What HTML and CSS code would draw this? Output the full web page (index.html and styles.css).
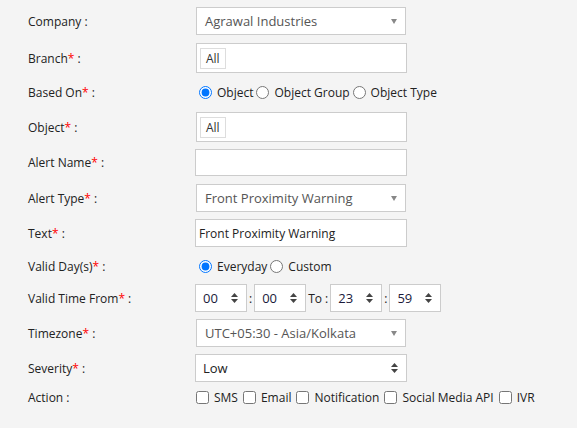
FILE: index.html
```html
<!DOCTYPE html>
<html lang="en">
<head>
	<meta charset="UTF-8">
	<title>Add Alert</title>
<link rel="stylesheet" href="styles.css">
</head>
<body>
<form class="alert-form" onsubmit="return false;">

  <div class="row">
    <label class="caption">Company :</label>
    <div class="combo">
      <span class="combo-text">Agrawal Industries</span>
      <span class="caret"></span>
    </div>
  </div>

  <div class="row spaced">
    <label class="caption">Branch<span class="req">*</span> :</label>
    <div class="tags"><span class="tag">All</span></div>
  </div>

  <div class="row row-choice spaced">
    <label class="caption">Based On<span class="req">*</span> :</label>
    <div class="choices">
      <label class="choice"><input type="radio" name="based" checked> Object</label>
      <label class="choice"><input type="radio" name="based"> Object Group</label>
      <label class="choice"><input type="radio" name="based"> Object Type</label>
    </div>
  </div>

  <div class="row spaced">
    <label class="caption">Object<span class="req">*</span> :</label>
    <div class="tags"><span class="tag">All</span></div>
  </div>

  <div class="row">
    <label class="caption">Alert Name<span class="req">*</span> :</label>
    <input class="field" type="text">
  </div>

  <div class="row spaced">
    <label class="caption">Alert Type<span class="req">*</span> :</label>
    <div class="combo">
      <span class="combo-text">Front Proximity Warning</span>
      <span class="caret"></span>
    </div>
  </div>

  <div class="row">
    <label class="caption">Text<span class="req">*</span> :</label>
    <input class="field field-tall" type="text" value="Front Proximity Warning">
  </div>

  <div class="row row-choice row-days spaced">
    <label class="caption">Valid Day(s)<span class="req">*</span> :</label>
    <div class="choices">
      <label class="choice"><input type="radio" name="days" checked> Everyday</label>
      <label class="choice"><input type="radio" name="days"> Custom</label>
    </div>
  </div>

  <div class="row">
    <label class="caption">Valid Time From<span class="req">*</span> :</label>
    <div class="times">
      <div class="spin"><span class="spin-text">00</span><svg class="updown" width="7" height="10" viewBox="0 0 7 10"><path d="M3.5 0L7 4H0z M3.5 10L0 6h7z"/></svg></div>
      <span class="sep">:</span>
      <div class="spin"><span class="spin-text">00</span><svg class="updown" width="7" height="10" viewBox="0 0 7 10"><path d="M3.5 0L7 4H0z M3.5 10L0 6h7z"/></svg></div>
      <span class="sep sep-to">To :</span>
      <div class="spin"><span class="spin-text">23</span><svg class="updown" width="7" height="10" viewBox="0 0 7 10"><path d="M3.5 0L7 4H0z M3.5 10L0 6h7z"/></svg></div>
      <span class="sep">:</span>
      <div class="spin"><span class="spin-text">59</span><svg class="updown" width="7" height="10" viewBox="0 0 7 10"><path d="M3.5 0L7 4H0z M3.5 10L0 6h7z"/></svg></div>
    </div>
  </div>

  <div class="row">
    <label class="caption">Timezone<span class="req">*</span> :</label>
    <div class="combo">
      <span class="combo-text">UTC+05:30 - Asia/Kolkata</span>
      <span class="caret"></span>
    </div>
  </div>

  <div class="row">
    <label class="caption">Severity<span class="req">*</span> :</label>
    <div class="spin spin-wide"><span class="spin-text">Low</span><svg class="updown" width="7" height="10" viewBox="0 0 7 10"><path d="M3.5 0L7 4H0z M3.5 10L0 6h7z"/></svg></div>
  </div>

  <div class="row row-action">
    <label class="caption">Action :</label>
    <div class="checks">
      <label class="check"><input type="checkbox"> SMS</label>
      <label class="check"><input type="checkbox"> Email</label>
      <label class="check"><input type="checkbox"> Notification</label>
      <label class="check"><input type="checkbox"> Social Media API</label>
      <label class="check"><input type="checkbox"> IVR</label>
    </div>
  </div>

</form>
</body>
</html>
```

FILE: styles.css
```css
html,body{
margin:0;padding:0;
background:#f4f4f4;
}
body{
font-family:"Open Sans","Liberation Sans",sans-serif;
font-size:12px;color:#222;
width:577px;height:428px;overflow:hidden;
}
/* form */
.alert-form{
display:flex;flex-direction:column;gap:7px;
padding:7px 0 0 28px;
}
.row{display:flex;align-items:center;}
.row.spaced{margin-top:1px;}
.caption{width:167px;flex:none;}
.req{color:#f00;}

/* select2 like box */
.combo{
box-sizing:border-box;width:210px;height:28px;margin-left:1px;
background:#fff;border:1px solid #ccc;
display:flex;align-items:center;justify-content:space-between;
padding:0 8px 0 8px;
font-size:13px;color:#555;
}
.caret{
width:0;height:0;margin-right:0;
border-left:3.5px solid transparent;border-right:3.5px solid transparent;
border-top:5px solid #888;
}

/* multi select with tags */
.tags{
box-sizing:border-box;width:211px;height:30px;margin-left:1px;
background:#fff;border:1px solid #ccc;
display:flex;align-items:center;padding-left:3px;
}
.tag{
box-sizing:border-box;height:21px;padding:0 5px;
border:1px solid #ddd;line-height:19px;
font-size:12px;color:#333;
}

/* text inputs */
.field{
box-sizing:border-box;width:212px;height:27px;margin:0;
background:#fff;border:1px solid #ccc;padding:0 3px;
font-family:inherit;font-size:12px;color:#222;outline:none;
}
.field-tall{height:28px;}

/* radios */
.row-choice{height:23px;}
.row-days{height:22px;}
.choices{display:flex;align-items:center;margin-left:3px;}
.choice{display:flex;align-items:center;margin-right:3px;}
.choice input{margin:0 5px 0 1px;width:13px;height:13px;}
.choice + .choice input{margin-left:0;}

/* time pickers */
.times{display:flex;align-items:center;}
.spin{
box-sizing:border-box;width:52px;height:28px;
background:#fff;border:1px solid #ccc;
display:flex;align-items:center;justify-content:space-between;
padding:0 8px 0 7px;
font-size:13px;color:#1a1a3a;
}
.spin-wide{width:212px;color:#222;}
.updown{fill:#444;}
.sep{margin:0 2px;}
.sep-to{margin:0 2px;}

/* actions */
.row-action{height:16px;}
.checks{display:flex;align-items:center;margin-left:1px;}
.check{display:flex;align-items:center;margin-right:5px;}
.check input{margin:0 5px 0 0;width:13px;height:13px;}
```
